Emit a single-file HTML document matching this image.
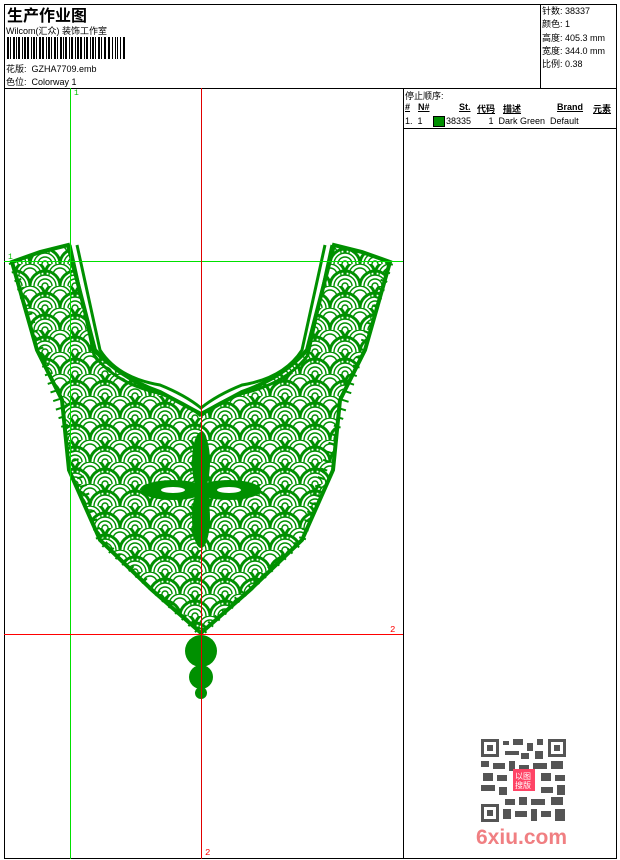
<!DOCTYPE html>
<html><head><meta charset="utf-8"><style>
body{margin:0;background:#fff;width:620px;height:860px;position:relative;overflow:hidden;font-family:"Liberation Sans","Noto Sans CJK SC",sans-serif;color:#000}
.a{position:absolute;white-space:nowrap}
.ln{position:absolute;background:#000}
.s{font-size:9px}
</style></head><body>
<div class="ln" style="left:4px;top:4px;width:613px;height:1px"></div>
<div class="ln" style="left:4px;top:858px;width:613px;height:1px"></div>
<div class="ln" style="left:4px;top:4px;width:1px;height:855px"></div>
<div class="ln" style="left:616px;top:4px;width:1px;height:855px"></div>
<div class="ln" style="left:4px;top:88px;width:613px;height:1px"></div>
<div class="ln" style="left:540px;top:4px;width:1px;height:84px"></div>
<div class="ln" style="left:403px;top:88px;width:1px;height:771px"></div>
<div class="ln" style="left:403px;top:128px;width:214px;height:1px"></div>

<div class="a" style="left:7px;top:2px;font-size:16px;font-weight:bold">生产作业图</div>
<div class="a s" style="left:6px;top:24px">Wilcom(汇众) 装饰工作室</div>
<svg class="a" style="left:7px;top:37px" width="120" height="22">
<g fill="#000">
<rect x="0" width="2" height="22"/><rect x="3" width="1" height="22"/><rect x="6" width="2" height="22"/><rect x="9" width="1" height="22"/><rect x="11" width="2" height="22"/><rect x="15" width="1" height="22"/><rect x="17" width="2" height="22"/><rect x="20" width="2" height="22"/><rect x="24" width="1" height="22"/><rect x="26" width="2" height="22"/><rect x="29" width="1" height="22"/><rect x="32" width="2" height="22"/><rect x="35" width="2" height="22"/><rect x="39" width="1" height="22"/><rect x="41" width="2" height="22"/><rect x="44" width="1" height="22"/><rect x="47" width="2" height="22"/><rect x="50" width="1" height="22"/><rect x="53" width="2" height="22"/><rect x="56" width="1" height="22"/><rect x="58" width="2" height="22"/><rect x="62" width="1" height="22"/><rect x="64" width="2" height="22"/><rect x="68" width="1" height="22"/><rect x="70" width="2" height="22"/><rect x="73" width="2" height="22"/><rect x="77" width="1" height="22"/><rect x="79" width="2" height="22"/><rect x="83" width="1" height="22"/><rect x="85" width="2" height="22"/><rect x="88" width="1" height="22"/><rect x="91" width="2" height="22"/><rect x="94" width="1" height="22"/><rect x="97" width="2" height="22"/><rect x="101" width="2" height="22"/><rect x="105" width="1" height="22"/><rect x="108" width="1" height="22"/><rect x="110" width="1" height="22"/><rect x="113" width="1" height="22"/><rect x="116" width="2" height="22"/>
</g></svg>
<div class="a s" style="left:6px;top:62px">花版:&nbsp; GZHA7709.emb</div>
<div class="a s" style="left:6px;top:75px">色位:&nbsp; Colorway 1</div>

<div class="a s" style="left:542px;top:5px;line-height:13.3px">针数: 38337<br>颜色: 1<br>高度: 405.3 mm<br>宽度: 344.0 mm<br>比例: 0.38</div>

<div class="a s" style="left:405px;top:89px">停止顺序:</div>
<div class="a s" style="left:405px;top:102px;font-weight:bold;text-decoration:underline">#</div>
<div class="a s" style="left:418px;top:102px;font-weight:bold;text-decoration:underline">N#</div>
<div class="a s" style="left:459px;top:102px;font-weight:bold;text-decoration:underline">St.</div>
<div class="a s" style="left:477px;top:102px;font-weight:bold;text-decoration:underline">代码</div>
<div class="a s" style="left:503px;top:102px;font-weight:bold;text-decoration:underline">描述</div>
<div class="a s" style="left:557px;top:102px;font-weight:bold;text-decoration:underline">Brand</div>
<div class="a s" style="left:593px;top:102px;font-weight:bold;text-decoration:underline">元素</div>
<div class="a s" style="left:405px;top:116px">1.&nbsp; 1</div>
<div class="a" style="left:433px;top:116px;width:10px;height:9px;background:#009000;border:1px solid #000"></div>
<div class="a s" style="left:446px;top:116px">38335&nbsp;&nbsp;&nbsp;&nbsp;&nbsp;&nbsp;&nbsp;1&nbsp; Dark Green&nbsp;&nbsp;Default</div>

<svg class="a" style="left:0;top:0" width="620" height="860">
<defs>
<pattern id="sc" width="30" height="22" patternUnits="userSpaceOnUse">
<rect width="30" height="22" fill="#fff"/>
<g fill="none" stroke="#009000" stroke-width="1.4">
<path d="M4,22 a11,11 0 0 1 22,0 M8,22 a7,7 0 0 1 14,0 M12,22 a3,3 0 0 1 6,0"/>
<path d="M-11,11 a11,11 0 0 1 22,0 M-7,11 a7,7 0 0 1 14,0 M19,11 a11,11 0 0 1 22,0 M23,11 a7,7 0 0 1 14,0"/>
</g>
<g fill="none" stroke="#009000" stroke-width="3">
<path d="M0,22 a15,15 0 0 1 30,0"/>
<path d="M-15,11 a15,15 0 0 1 30,0 M15,11 a15,15 0 0 1 30,0"/>
</g>
</pattern>
</defs>
<path d="M12,262 L40,252 L68,245 L95,350 Q120,378 160,392 L201,414 L242,392 Q282,378 307,350 L334,245 L362,252 L390,262 L365,350 L340,400 L333,470 L302,540 L250,590 L201,633 L152,590 L100,540 L69,470 L62,400 L37,350 Z" fill="url(#sc)" stroke="#009000" stroke-width="4"/>
<g fill="none" stroke="#009000" stroke-width="3">
<path d="M77,245 L100,350 Q118,378 160,385 Q185,395 201,408 Q217,395 242,385 Q284,378 302,350 L325,245"/>
<path d="M70,245 L94,355 Q115,383 158,393 Q185,402 201,416"/>
<path d="M332,245 L308,355 Q287,383 244,393 Q217,402 201,416"/>
<path d="M12,262 L55,395 L100,540 L201,633 L302,540 L347,395 L390,262" stroke-dasharray="2 7" stroke-width="7"/>
</g>
<g fill="#009000">
<ellipse cx="173" cy="490" rx="32" ry="10"/><ellipse cx="229" cy="490" rx="32" ry="10"/>
<ellipse cx="201" cy="462" rx="9" ry="30"/><ellipse cx="201" cy="518" rx="9" ry="30"/>
<circle cx="201" cy="651" r="16"/><circle cx="201" cy="677" r="12"/><circle cx="201" cy="693" r="6"/>
</g>
<g fill="#fff"><ellipse cx="173" cy="490" rx="12" ry="3"/><ellipse cx="229" cy="490" rx="12" ry="3"/></g>
<rect x="70" y="88" width="1" height="771" fill="#00e000"/>
<rect x="4" y="261" width="399" height="1" fill="#00e000"/>
<rect x="201" y="88" width="1" height="771" fill="#e00000"/>
<rect x="4" y="634" width="399" height="1" fill="#ff0000"/>
<text x="74" y="95" font-size="8" fill="#00c000" font-family="Liberation Mono">1</text>
<text x="8" y="259" font-size="8" fill="#00c000" font-family="Liberation Mono">1</text>
<text x="390" y="632" font-size="9" fill="#f00" font-family="Liberation Mono">2</text>
<text x="205" y="855" font-size="9" fill="#f00" font-family="Liberation Mono">2</text>
</svg>

<svg class="a" style="left:481px;top:739px" width="85" height="83">
<g fill="#555">
<rect x="0" y="0" width="18" height="18"/><rect x="67" y="0" width="18" height="18"/><rect x="0" y="65" width="18" height="18"/>
<rect x="22" y="2" width="6" height="4"/><rect x="32" y="0" width="10" height="6"/><rect x="46" y="4" width="6" height="8"/><rect x="56" y="0" width="6" height="6"/>
<rect x="24" y="12" width="14" height="4"/><rect x="40" y="14" width="8" height="6"/><rect x="54" y="12" width="8" height="8"/>
<rect x="0" y="22" width="8" height="6"/><rect x="12" y="24" width="12" height="6"/><rect x="28" y="22" width="6" height="10"/><rect x="38" y="26" width="10" height="4"/><rect x="52" y="24" width="14" height="6"/><rect x="70" y="22" width="12" height="8"/>
<rect x="2" y="34" width="10" height="8"/><rect x="16" y="36" width="10" height="6"/><rect x="60" y="34" width="10" height="8"/><rect x="74" y="36" width="10" height="6"/>
<rect x="0" y="46" width="14" height="6"/><rect x="18" y="48" width="8" height="8"/><rect x="60" y="48" width="12" height="6"/><rect x="76" y="46" width="8" height="10"/>
<rect x="24" y="60" width="10" height="6"/><rect x="38" y="58" width="8" height="8"/><rect x="50" y="60" width="14" height="6"/><rect x="70" y="58" width="12" height="8"/>
<rect x="22" y="70" width="8" height="10"/><rect x="34" y="72" width="12" height="6"/><rect x="50" y="70" width="6" height="12"/><rect x="60" y="72" width="10" height="6"/><rect x="74" y="70" width="10" height="12"/>
</g>
<g fill="#fff"><rect x="3" y="3" width="12" height="12"/><rect x="70" y="3" width="12" height="12"/><rect x="3" y="68" width="12" height="12"/></g>
<g fill="#555"><rect x="6" y="6" width="6" height="6"/><rect x="73" y="6" width="6" height="6"/><rect x="6" y="71" width="6" height="6"/></g>
<rect x="32" y="30" width="22" height="22" fill="#f46"/>
<text x="34" y="40" font-size="8" fill="#fff">以图</text><text x="34" y="49" font-size="8" fill="#fff">搜版</text>
</svg>
<div class="a" style="left:476px;top:826px;font-size:21px;font-weight:bold;color:#f07f82">6xiu.com</div>
</body></html>
